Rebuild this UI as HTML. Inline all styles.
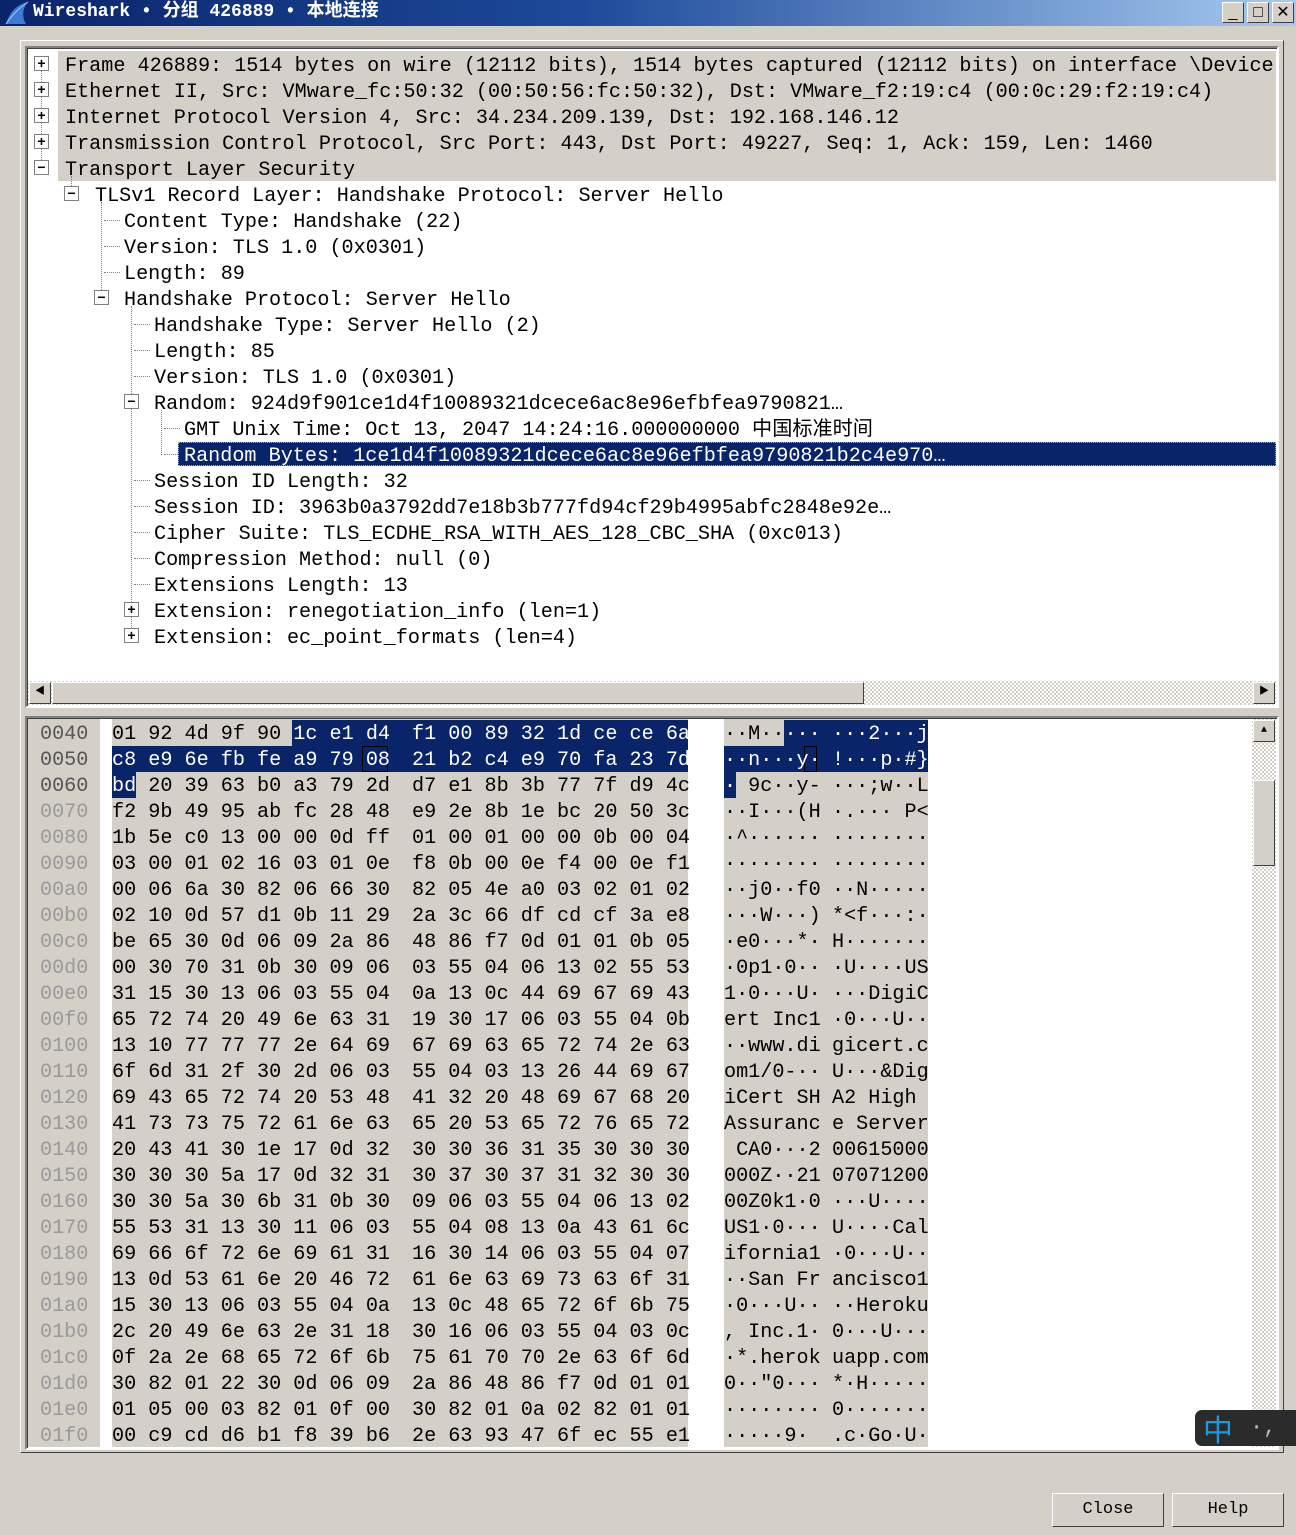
<!DOCTYPE html>
<html><head><meta charset="utf-8"><style>
*{margin:0;padding:0;box-sizing:border-box}
body{width:1296px;height:1535px;background:#d4d0c8;position:relative;overflow:hidden;font-family:"Liberation Mono","Noto Sans CJK SC",monospace;font-size:20.15px}
.a{position:absolute}
#title{left:0;top:0;width:1296px;height:26px;background:linear-gradient(90deg,#0a246a 0%,#1d4a9a 45%,#a6caf0 100%);color:#fff;font-size:18px;font-weight:bold;line-height:25px;padding-left:33px;white-space:pre;font-family:"Liberation Mono","Noto Sans CJK SC",monospace}
.wb{position:absolute;top:2px;width:22px;height:21px;background:#d4d0c8;border:1px solid;border-color:#fff #404040 #404040 #fff;color:#000;font-size:16px;text-align:center;line-height:19px;font-family:"Liberation Sans",sans-serif}
.pane{position:absolute;background:#fff;border:2px solid;border-color:#808080 #fff #fff #808080;box-shadow:inset 1px 1px 0 #404040}
.r{position:absolute;white-space:pre;line-height:26px;height:26px;color:#000;margin-top:3px}
.bx{position:absolute;width:15px;height:15px;border:1px solid #808080;background:#fff;font-size:14px;line-height:12px;text-align:center;color:#000;font-family:"Liberation Sans",sans-serif;font-weight:bold}
.vd{position:absolute;border-left:1px dotted #808080;width:0}
.hd{position:absolute;border-top:1px dotted #808080;height:0}
.hx{position:absolute;white-space:pre;line-height:26px;height:26px;margin-top:3px}
.ad{color:#999}
.btn{position:absolute;width:112px;height:34px;background:#d4d0c8;border:1px solid;border-color:#fff #404040 #404040 #fff;text-align:center;line-height:32px;font-size:17px;font-family:"Liberation Mono",monospace;color:#000}
.sel{position:absolute;background:#0a246a}
.w{color:#fff}
</style></head><body>
<div id="title" class="a">Wireshark • 分组 426889 • 本地连接</div>
<svg class="a" style="left:4px;top:1px" width="26" height="24"><path d="M2 23 C6 10 14 3 24 1 C18 8 18 16 22 23 Z" fill="#3a7bd5"/><path d="M2 23 C8 14 14 8 24 1" stroke="#9cc8ff" fill="none"/></svg>
<div class="wb" style="left:1222px">_</div><div class="wb" style="left:1247px">□</div><div class="wb" style="left:1272px">✕</div>

<div class="a" style="left:20px;top:40px;width:1264px;height:1413px;border:1px solid;border-color:#fff #404040 #404040 #fff"></div>

<div class="pane" style="left:25px;top:46px;width:1254px;height:662px"></div>
<div class="a" style="left:58px;top:51px;width:1218px;height:130px;background:#d4d0c8"></div>
<div class="vd" style="left:41px;top:58px;height:110px"></div>
<div class="vd" style="left:71px;top:176px;height:20px"></div>
<div class="vd" style="left:101px;top:202px;height:96px"></div>
<div class="vd" style="left:131px;top:306px;height:330px"></div>
<div class="vd" style="left:161px;top:410px;height:45px"></div>
<div class="hd" style="left:104px;top:220px;width:16px"></div>
<div class="hd" style="left:104px;top:246px;width:16px"></div>
<div class="hd" style="left:104px;top:272px;width:16px"></div>
<div class="hd" style="left:134px;top:324px;width:16px"></div>
<div class="hd" style="left:134px;top:350px;width:16px"></div>
<div class="hd" style="left:134px;top:376px;width:16px"></div>
<div class="hd" style="left:164px;top:428px;width:16px"></div>
<div class="hd" style="left:164px;top:454px;width:14px"></div>
<div class="hd" style="left:134px;top:480px;width:16px"></div>
<div class="hd" style="left:134px;top:506px;width:16px"></div>
<div class="hd" style="left:134px;top:532px;width:16px"></div>
<div class="hd" style="left:134px;top:558px;width:16px"></div>
<div class="hd" style="left:134px;top:584px;width:16px"></div>

<div class="bx" style="left:34px;top:56px">+</div>
<div class="bx" style="left:34px;top:82px">+</div>
<div class="bx" style="left:34px;top:108px">+</div>
<div class="bx" style="left:34px;top:134px">+</div>
<div class="bx" style="left:34px;top:160px">−</div>
<div class="bx" style="left:64px;top:186px">−</div>
<div class="bx" style="left:94px;top:290px">−</div>
<div class="bx" style="left:124px;top:394px">−</div>
<div class="bx" style="left:124px;top:602px">+</div>
<div class="bx" style="left:124px;top:628px">+</div>

<div class="r" style="left:65px;top:51px">Frame 426889: 1514 bytes on wire (12112 bits), 1514 bytes captured (12112 bits) on interface \Device</div>
<div class="r" style="left:65px;top:77px">Ethernet II, Src: VMware_fc:50:32 (00:50:56:fc:50:32), Dst: VMware_f2:19:c4 (00:0c:29:f2:19:c4)</div>
<div class="r" style="left:65px;top:103px">Internet Protocol Version 4, Src: 34.234.209.139, Dst: 192.168.146.12</div>
<div class="r" style="left:65px;top:129px">Transmission Control Protocol, Src Port: 443, Dst Port: 49227, Seq: 1, Ack: 159, Len: 1460</div>
<div class="r" style="left:65px;top:155px">Transport Layer Security</div>
<div class="r" style="left:95px;top:181px">TLSv1 Record Layer: Handshake Protocol: Server Hello</div>
<div class="r" style="left:124px;top:207px">Content Type: Handshake (22)</div>
<div class="r" style="left:124px;top:233px">Version: TLS 1.0 (0x0301)</div>
<div class="r" style="left:124px;top:259px">Length: 89</div>
<div class="r" style="left:124px;top:285px">Handshake Protocol: Server Hello</div>
<div class="r" style="left:154px;top:311px">Handshake Type: Server Hello (2)</div>
<div class="r" style="left:154px;top:337px">Length: 85</div>
<div class="r" style="left:154px;top:363px">Version: TLS 1.0 (0x0301)</div>
<div class="r" style="left:154px;top:389px">Random: 924d9f901ce1d4f10089321dcece6ac8e96efbfea9790821…</div>
<div class="r" style="left:184px;top:415px">GMT Unix Time: Oct 13, 2047 14:24:16.000000000 中国标准时间</div>
<div class="sel" style="left:178px;top:442px;width:1098px;height:24px;outline:1px dotted #c8b060;outline-offset:-1px"></div>
<div class="r w" style="left:184px;top:441px">Random Bytes: 1ce1d4f10089321dcece6ac8e96efbfea9790821b2c4e970…</div>
<div class="r" style="left:154px;top:467px">Session ID Length: 32</div>
<div class="r" style="left:154px;top:493px">Session ID: 3963b0a3792dd7e18b3b777fd94cf29b4995abfc2848e92e…</div>
<div class="r" style="left:154px;top:519px">Cipher Suite: TLS_ECDHE_RSA_WITH_AES_128_CBC_SHA (0xc013)</div>
<div class="r" style="left:154px;top:545px">Compression Method: null (0)</div>
<div class="r" style="left:154px;top:571px">Extensions Length: 13</div>
<div class="r" style="left:154px;top:597px">Extension: renegotiation_info (len=1)</div>
<div class="r" style="left:154px;top:623px">Extension: ec_point_formats (len=4)</div>

<div class="a" style="left:28px;top:681px;width:1248px;height:24px;background:repeating-conic-gradient(#d4d0c8 0 25%,#fff 0 50%) 0 0/4px 4px"></div>
<div class="a" style="left:29px;top:682px;width:22px;height:22px;background:#d4d0c8;border:1px solid;border-color:#fff #404040 #404040 #fff;font-size:10px;text-align:center;line-height:20px">◀</div>
<div class="a" style="left:52px;top:682px;width:812px;height:22px;background:#d4d0c8;border:1px solid;border-color:#fff #404040 #404040 #fff"></div>
<div class="a" style="left:1253px;top:682px;width:22px;height:22px;background:#d4d0c8;border:1px solid;border-color:#fff #404040 #404040 #fff;font-size:10px;text-align:center;line-height:20px">▶</div>

<div class="pane" style="left:25px;top:716px;width:1254px;height:734px"></div>
<div class="a" style="left:28px;top:719px;width:72px;height:728px;background:#d4d0c8"></div>
<div class="a" style="left:112px;top:719px;width:576px;height:728px;background:#d4d0c8"></div>
<div class="a" style="left:724px;top:719px;width:204px;height:728px;background:#d4d0c8"></div>
<div class="sel" style="left:292px;top:720px;width:396px;height:26px"></div>
<div class="sel" style="left:112px;top:746px;width:576px;height:26px"></div>
<div class="sel" style="left:112px;top:772px;width:24px;height:26px"></div>
<div class="sel" style="left:784px;top:720px;width:144px;height:26px"></div>
<div class="sel" style="left:724px;top:746px;width:204px;height:26px"></div>
<div class="sel" style="left:724px;top:772px;width:12px;height:26px"></div>
<div class="a" style="left:362px;top:746px;width:26px;height:26px;border:1px solid #000"></div>
<div class="a" style="left:804px;top:746px;width:13px;height:26px;border:1px solid #000"></div>

<div class="hx" style="left:40px;top:719px;color:#555;height:auto">0040
0050
0060</div>
<div class="hx ad" style="left:40px;top:797px;height:auto">0070
0080
0090
00a0
00b0
00c0
00d0
00e0
00f0
0100
0110
0120
0130
0140
0150
0160
0170
0180
0190
01a0
01b0
01c0
01d0
01e0
01f0</div>
<div class="hx" style="left:112px;top:719px">01 92 4d 9f 90 <span class="w">1c e1 d4</span></div>
<div class="hx w" style="left:412px;top:719px">f1 00 89 32 1d ce ce 6a</div>
<div class="hx w" style="left:112px;top:745px">c8 e9 6e fb fe a9 79 08</div>
<div class="hx w" style="left:412px;top:745px">21 b2 c4 e9 70 fa 23 7d</div>
<div class="hx" style="left:112px;top:771px;height:auto"><span class="w">bd</span> 20 39 63 b0 a3 79 2d
f2 9b 49 95 ab fc 28 48
1b 5e c0 13 00 00 0d ff
03 00 01 02 16 03 01 0e
00 06 6a 30 82 06 66 30
02 10 0d 57 d1 0b 11 29
be 65 30 0d 06 09 2a 86
00 30 70 31 0b 30 09 06
31 15 30 13 06 03 55 04
65 72 74 20 49 6e 63 31
13 10 77 77 77 2e 64 69
6f 6d 31 2f 30 2d 06 03
69 43 65 72 74 20 53 48
41 73 73 75 72 61 6e 63
20 43 41 30 1e 17 0d 32
30 30 30 5a 17 0d 32 31
30 30 5a 30 6b 31 0b 30
55 53 31 13 30 11 06 03
69 66 6f 72 6e 69 61 31
13 0d 53 61 6e 20 46 72
15 30 13 06 03 55 04 0a
2c 20 49 6e 63 2e 31 18
0f 2a 2e 68 65 72 6f 6b
30 82 01 22 30 0d 06 09
01 05 00 03 82 01 0f 00
00 c9 cd d6 b1 f8 39 b6</div>
<div class="hx" style="left:412px;top:771px;height:auto">d7 e1 8b 3b 77 7f d9 4c
e9 2e 8b 1e bc 20 50 3c
01 00 01 00 00 0b 00 04
f8 0b 00 0e f4 00 0e f1
82 05 4e a0 03 02 01 02
2a 3c 66 df cd cf 3a e8
48 86 f7 0d 01 01 0b 05
03 55 04 06 13 02 55 53
0a 13 0c 44 69 67 69 43
19 30 17 06 03 55 04 0b
67 69 63 65 72 74 2e 63
55 04 03 13 26 44 69 67
41 32 20 48 69 67 68 20
65 20 53 65 72 76 65 72
30 30 36 31 35 30 30 30
30 37 30 37 31 32 30 30
09 06 03 55 04 06 13 02
55 04 08 13 0a 43 61 6c
16 30 14 06 03 55 04 07
61 6e 63 69 73 63 6f 31
13 0c 48 65 72 6f 6b 75
30 16 06 03 55 04 03 0c
75 61 70 70 2e 63 6f 6d
2a 86 48 86 f7 0d 01 01
30 82 01 0a 02 82 01 01
2e 63 93 47 6f ec 55 e1</div>
<div class="hx" style="left:724px;top:719px">··M··<span class="w">···</span></div>
<div class="hx w" style="left:832px;top:719px">···2···j</div>
<div class="hx w" style="left:724px;top:745px">··n···y·</div>
<div class="hx w" style="left:832px;top:745px">!···p·#}</div>
<div class="hx" style="left:724px;top:771px;height:auto"><span class="w">·</span> 9c··y-
··I···(H
·^······
········
··j0··f0
···W···)
·e0···*·
·0p1·0··
1·0···U·
ert Inc1
··www.di
om1/0-··
iCert SH
Assuranc
 CA0···2
000Z··21
00Z0k1·0
US1·0···
ifornia1
··San Fr
·0···U··
, Inc.1·
·*.herok
0··"0···
········
·····9·</div>
<div class="hx" style="left:832px;top:771px;height:auto">···;w··L
·.··· P<
········
········
··N·····
*&lt;f···:·
H·······
·U····US
···DigiC
·0···U··
gicert.c
U···&amp;Dig
A2 High
e Server
00615000
07071200
···U····
U····Cal
·0···U··
ancisco1
··Heroku
0···U···
uapp.com
*·H·····
0·······
.c·Go·U·</div>

<div class="a" style="left:1252px;top:719px;width:24px;height:728px;background:repeating-conic-gradient(#d4d0c8 0 25%,#fff 0 50%) 0 0/4px 4px"></div>
<div class="a" style="left:1253px;top:720px;width:22px;height:22px;background:#d4d0c8;border:1px solid;border-color:#fff #404040 #404040 #fff;font-size:10px;text-align:center;line-height:20px">▲</div>
<div class="a" style="left:1253px;top:780px;width:22px;height:86px;background:#d4d0c8;border:1px solid;border-color:#fff #404040 #404040 #fff"></div>

<div class="a" style="left:1195px;top:1410px;width:110px;height:36px;background:#2b2b2b;border-radius:7px 0 0 7px"></div>
<div class="a" style="left:1203px;top:1410px;color:#1a9ae0;font-size:30px;line-height:36px;font-family:'Noto Sans CJK SC',sans-serif">中</div>
<div class="a" style="left:1250px;top:1410px;color:#bbb;font-size:22px;line-height:36px">·,</div>

<div class="btn" style="left:1052px;top:1493px">Close</div>
<div class="btn" style="left:1172px;top:1493px">Help</div>
</body></html>
